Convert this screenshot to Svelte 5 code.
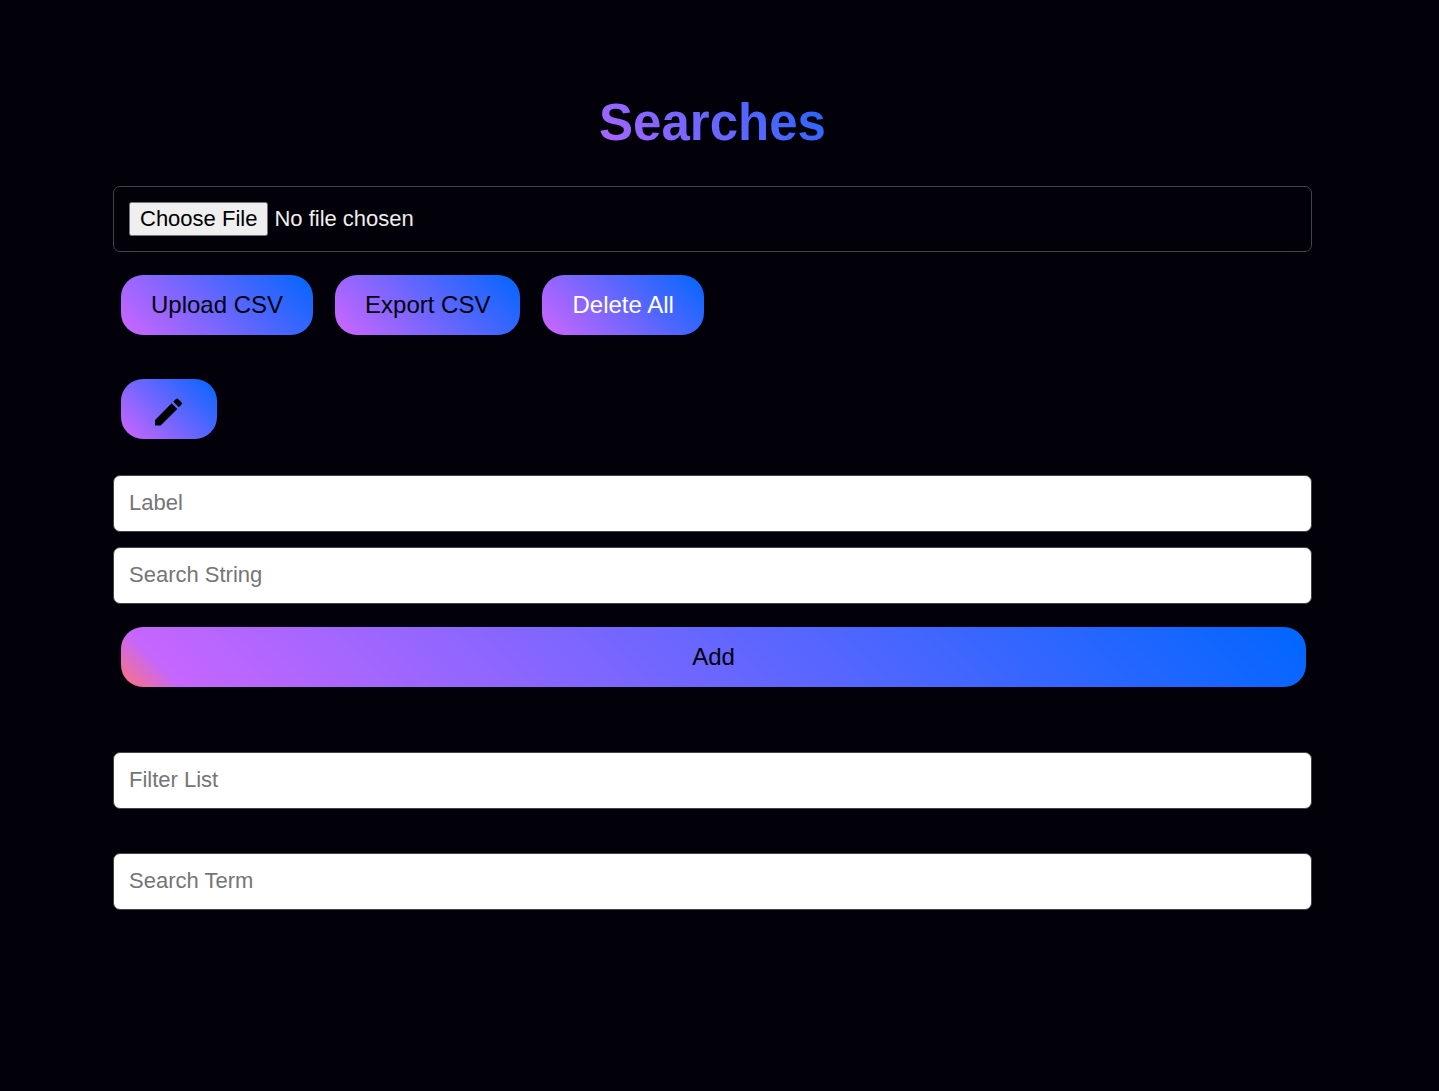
<script lang="ts">
  let label = $state('');
  let searchString = $state('');
  let filter = $state('');
  let term = $state('');
</script>

<main class="searches">
  <h1 class="searches__title">Searches</h1>

  <input class="field field--file" type="file" accept=".csv" aria-label="CSV file" />

  <div class="searches__actions">
    <button type="button" class="btn">Upload CSV</button>
    <button type="button" class="btn">Export CSV</button>
    <button type="button" class="btn btn--light">Delete All</button>
  </div>

  <div class="searches__edit">
    <button type="button" class="btn btn--icon" aria-label="Edit">
      <svg viewBox="0 0 24 24" width="36" height="36" aria-hidden="true">
        <path d="M2.7 17.25V21h3.75L17.51 9.94l-3.75-3.75L2.7 17.25zM20.41 7.04a1 1 0 0 0 0-1.41l-2.34-2.34a1 1 0 0 0-1.41 0l-1.83 1.83 3.75 3.75 1.83-1.83z" />
      </svg>
    </button>
  </div>

  <form class="searches__form" onsubmit={(e) => e.preventDefault()}>
    <input class="field" type="text" placeholder="Label" aria-label="Label" bind:value={label} />
    <input class="field" type="text" placeholder="Search String" aria-label="Search String" bind:value={searchString} />
    <button type="submit" class="btn btn--wide">Add</button>
  </form>

  <div class="searches__lookup">
    <input class="field" type="text" placeholder="Filter List" aria-label="Filter List" bind:value={filter} />
    <input class="field" type="text" placeholder="Search Term" aria-label="Search Term" bind:value={term} />
  </div>
</main>

<style>
  :global(body) {
    margin: 0;
    background: #020009;
  }

  .searches {
    --gradient: linear-gradient(45deg, #ff7474, #c566ff 5%, #0066ff);
    display: flex;
    flex-direction: column;
    padding: 93px 127px 93px 113px;
    font-family: 'Liberation Sans', Arial, sans-serif;
  }

  .searches__title {
    align-self: center;
    margin: 0 0 33px;
    padding: 0 60px;
    font-size: 51px;
    line-height: 60px;
    font-weight: 700;
    background: var(--gradient);
    background-clip: text;
    color: transparent;
  }

  .field {
    box-sizing: border-box;
    width: 100%;
    height: 57px;
    margin: 0;
    padding: 0 15px 2px;
    border: 1px solid #444;
    border-radius: 7px;
    background: #fff;
    color: #111;
    font-family: inherit;
    font-size: 22px;
  }

  .field::placeholder {
    color: #757575;
  }

  .field--file {
    height: 66px;
    padding: 15px;
    background: transparent;
    color: #eee;
  }

  .field--file::file-selector-button {
    margin-right: 6px;
    padding: 2px 9px;
  }

  .searches__actions {
    display: flex;
    gap: 22px;
    margin: 23px 8px 44px;
  }

  .searches__edit {
    display: flex;
    margin: 0 8px 36px;
  }

  .btn {
    height: 60px;
    padding: 0 30px;
    border: 0;
    border-radius: 22px;
    background: var(--gradient);
    color: #020009;
    font-family: inherit;
    font-size: 24px;
    cursor: pointer;
  }

  .btn--light {
    color: #fff;
  }

  .btn--icon {
    display: flex;
    align-items: center;
    padding-top: 6px;
  }

  .btn--icon svg {
    fill: #000;
  }

  .searches__form {
    display: flex;
    flex-direction: column;
    gap: 15px;
    margin-bottom: 65px;
  }

  .btn--wide {
    margin: 8px 6px 0 8px;
  }

  .searches__lookup {
    display: flex;
    flex-direction: column;
    gap: 44px;
  }
</style>
